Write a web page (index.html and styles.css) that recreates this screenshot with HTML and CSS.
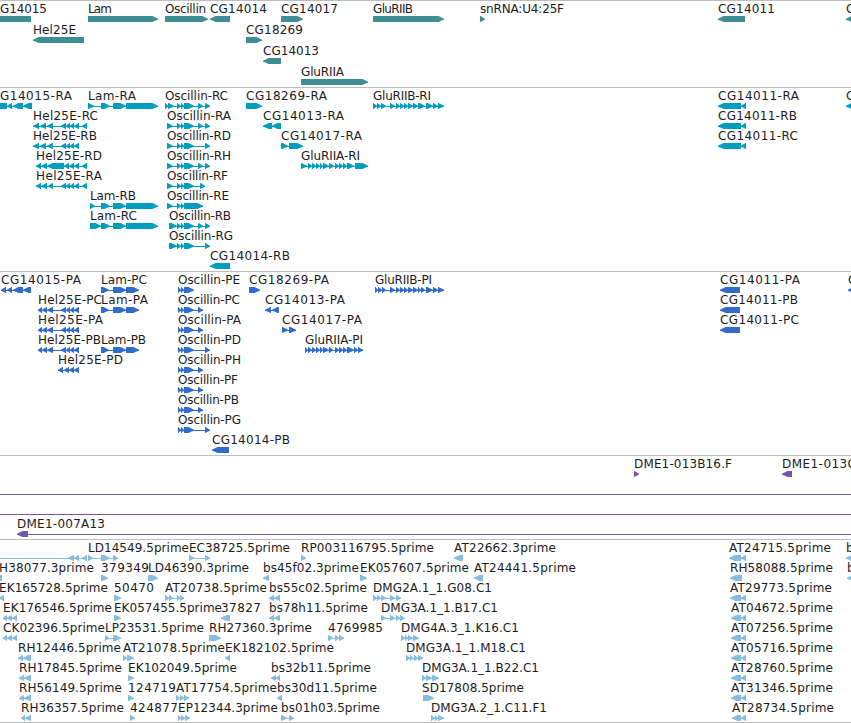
FILE: index.html
```html
<!DOCTYPE html>
<html lang="en">
<head>
<meta charset="utf-8">
<title>Genome tracks</title>
<link rel="stylesheet" href="styles.css">
</head>
<body>
<main class="browser">
  <section class="track genes" id="genes"></section>
  <section class="track transcripts" id="transcripts"></section>
  <section class="track proteins" id="proteins"></section>
  <section class="track clones" id="clones"></section>
  <section class="track ests" id="ests"></section>
</main>
<script src="tracks.js"></script>
</body>
</html>
```
FILE: styles.css
```css
body {
  margin: 0;
  background: #fff;
  overflow: hidden;
}

.browser {
  display: flex;
  flex-direction: column;
  width: 851px;
  height: 722px;
  border-bottom: 1px solid #bebebe;
}

.track {
  box-sizing: border-box;
  flex: none;
  display: flex;
  flex-direction: column;
  border-top: 1px solid #bebebe;
  padding-top: 1px;
}

.row {
  display: block;
  flex: none;
  width: 851px;
  height: 20px;
  overflow: hidden;
}

.row text {
  font: 12px "DejaVu Sans", sans-serif;
  fill: #1c1c1c;
}

.genes { height: 87px; color: #3f8e94; }
.genes .row { height: 21px; }
.transcripts { height: 184px; color: #009dbf; }
.proteins { height: 184px; color: #316ccc; }
.clones { height: 84px; color: #7556a8; }
.ests { height: 183px; color: #87bcde; }

.feature { fill: currentColor; }
```
FILE: tracks.js
```js
// One string per row. Features are separated by ";" and hold
// label | label start | label end | strand | exon ranges
const osc = "177-181 181-184 184-194";
const hel = "61-66 66-70 70-74 74-79";
const pep = "178-181 181-184 184-194";
const lamP = "101-109 113-126 126-139";
const tracks = {
  genes: [
    "G14015|0|46|<|-12-31;Lam|88|111|>|88-158;Oscillin|165|205|>|165-208;CG14014|210|266|<|210-230;CG14017|281|337|>|281-303;GluRIIB|373|412|>|373-444;snRNA:U4:25F|480|563|>|480-485;CG14011|718|774|<|718-745;C|846||<|846-870",
    "Hel25E|33|75|<|33-84;CG18269|246|302|>|246-262",
    "CG14013|263|318|<|263-281",
    "GluRIIA|301|343|>|301-368"
  ],
  transcripts: [
    `G14015-RA|0|71|<|-12-7 7-12 13-23 23-32;Lam-RA|88|135|>|88-94 101-110 113-126 126-158;Oscillin-RC|165|227|>|165-168 168-174 ${osc} 198-203 205-210;CG18269-RA|246|326|>|246-262;GluRIIB-RI|373|430|>|373-377 377-381 381-386 390-395 396-400 400-404 404-408 408-413 413-418 418-425 426-433 433-438 438-444;CG14011-RA|718|798|<|718-741 741-746;C|846||<|846-870`,
    `Hel25E-RC|33|97|<|33-39 40-46 47-53 ${hel} 82-87;Oscillin-RA|167|230|>|167-173 ${osc} 198-203 205-210;CG14013-RA|263|343|<|263-272 272-281;CG14011-RB|718|796|<|718-741 741-746`,
    `Hel25E-RB|33|96|<|33-39 40-46 47-53 ${hel};Oscillin-RD|167|230|>|167-173 ${osc} 205-210;CG14017-RA|281|361|>|281-288 289-303;CG14011-RC|718|797|<|718-741 741-746`,
    `Hel25E-RD|36|101|<|36-41 41-47 47-64 64-69 69-74 74-79 82-87;Oscillin-RH|167|230|>|167-173 ${osc} 198-203 205-210;GluRIIA-RI|301|359|>|301-307 308-312 312-316 316-320 320-323 323-329 329-334 335-339 339-343 343-347 347-354 355-368`,
    `Hel25E-RA|36|101|<|36-41 41-47 48-53 ${hel} 82-87;Oscillin-RF|167|227|>|167-173 ${osc} 200-205`,
    "Lam-RB|90|135|>|90-95 101-110 113-126 126-158;Oscillin-RE|167|228|>|167-173 177-181 181-184 184-203",
    `Lam-RC|90|136|>|90-101 101-110 113-126 126-158;Oscillin-RB|169|230|>|169-177 ${osc} 198-203 205-210`,
    `Oscillin-RG|169|232|>|169-177 ${osc} 205-210`,
    "CG14014-RB|210|289|<|210-230"
  ],
  proteins: [
    `CG14015-PA|1|80|<|1-6 7-12 13-23 23-31;Lam-PC|101|146|>|${lamP};Oscillin-PE|178|239|>|${pep};CG18269-PA|249|328|>|249-260;GluRIIB-PI|375|431|>|375-378 378-382 382-386 390-395 396-400 400-404 404-408 408-413 413-418 418-421 421-425 426-433 433-438 438-444;CG14011-PA|720|799|<|720-740;C|848||<|848-870`,
    `Hel25E-PC|38|101|<|38-42 42-47 47-53 ${hel};Lam-PA|101|147|>|${lamP};Oscillin-PC|178|239|>|${pep} 198-203;CG14013-PA|265|344|<|265-271 272-279;CG14011-PB|720|797|<|720-740`,
    `Hel25E-PA|38|102|<|38-42 42-47 47-53 ${hel};Oscillin-PA|178|240|>|${pep} 198-203;CG14017-PA|282|361|>|282-288 289-296;CG14011-PC|720|798|<|720-740`,
    `Hel25E-PB|38|100|<|38-42 42-47 47-53 ${hel};Lam-PB|101|145|>|${lamP};Oscillin-PD|178|240|>|${pep} 205-210;GluRIIA-PI|305|362|>|305-308 308-312 312-316 316-320 320-323 323-329 329-333 335-339 339-343 343-347 347-354 354-358 358-363`,
    `Hel25E-PD|58|122|<|58-63 64-69 69-74 74-79;Oscillin-PH|178|240|>|${pep} 198-203`,
    `Oscillin-PF|178|237|>|${pep} 198-203`,
    `Oscillin-PB|178|238|>|${pep} 198-203`,
    `Oscillin-PG|178|240|>|${pep} 205-210`,
    "CG14014-PB|212|289|<|212-229"
  ],
  clones: [
    "DME1-013B16.F|634|731|>|634-639;DME1-013C|782|855|<|782-792",
    "|0||-|-20-870",
    "|0||-|-20-870",
    "DME1-007A13|17|104|<|17-28;|0||-|28-870"
  ],
  ests: [
    "|0||-|-20-68;|0||<|68-74 74-79 82-87;LD14549.5prime|88|188|>|88-93 101-110 113-118;EC38725.5prime|189|289|>|189-194 205-210;RP003116795.5prime|301|433|>|301-306;AT22662.3prime|454|555|<|454-463;AT24715.5prime|729|830|<|729-741 741-746;b|846||<|846-870",
    "H38077.3prime|-1|93|-|;|0||=|-5-2;379349|101|148|>|101-108;LD46390.3prime|148|248|>|148-158;bs45f02.3prime|263|358|<|263-269;EK057607.5prime|360|468|>|360-367;AT24441.5prime|474|575|<|474-483;RH58088.5prime|730|832|<|730-742;b|847||<|847-870",
    "EK165728.5prime|-1|107|<|-1-4;50470|114|153|>|114-121;AT20738.5prime|165|266|>|165-169 169-173 177-180 180-184;bs55c02.5prime|269|366|<|269-274 274-280;DMG2A.1_1.G08.C1|373|491|>|373-377 377-381 381-386 390-395 396-401;AT29773.5prime|730|831|<|730-741 741-746",
    "EK176546.5prime|3|111|<|3-7 7-12 12-17;EK057455.5prime|114|221|>|114-121;37827|221|260|<|221-230;bs78h11.5prime|269|367|<|269-274 274-280;DMG3A.1_1.B17.C1|381|497|>|381-386 390-395 396-400 400-405;AT04672.5prime|731|832|<|731-741 741-746",
    "CK02396.5prime|3|104|<|3-7 7-12 12-17;LP23531.5prime|105|203|>|105-109 113-121;RH27360.3prime|209|311|>|209-221;4769985|328|382|>|328-333 335-339 339-344;DMG4A.3_1.K16.C1|401|518|>|401-405 405-408 408-413 413-419;AT07256.5prime|731|832|<|731-741 741-746",
    "RH12446.5prime|18|120|<|18-23 23-31;AT21078.5prime|123|224|>|123-127 127-134;EK182102.5prime|225|333|<|225-230;DMG3A.1_1.M18.C1|406|525|>|406-410 410-413 414-418 418-423;AT05716.5prime|731|832|<|731-741 741-746",
    "RH17845.5prime|19|121|<|19-24 24-31;EK102049.5prime|128|236|>|128-134;bs32b11.5prime|271|370|<|271-276 276-280;DMG3A.1_1.B22.C1|422|538|>|422-426 426-432 432-439;AT28760.5prime|731|832|<|731-741 741-746",
    "RH56149.5prime|19|121|<|19-24 24-31;124719|128|175|>|128-134;AT17754.5prime|176|276|>|176-180 180-184 184-189;bs30d11.5prime|277|376|<|277-282;SD17808.5prime|422|523|>|423-434;AT31346.5prime|731|832|<|731-741 741-746",
    "RH36357.5prime|21|123|<|21-25 25-31;424877|130|177|>|130-135;EP12344.3prime|178|277|>|178-181 181-185 185-190;bs01h03.5prime|281|379|>|281-287 289-294;DMG3A.2_1.C11.F1|431|546|>|431-435 435-438 438-444;AT28734.5prime|732|833|<|732-741 741-746"
  ]
};

const TOP = 14, MID = 17.3, BOTTOM = 20;

// Exon block whose last few pixels taper to a blunt tip on the strand side.
function exon(a, b, strand) {
  const w = b - a;
  if (strand === "=") return `M${a} ${TOP}H${b}V${BOTTOM}H${a}Z`;
  const tip = strand === ">" ? b : a;
  const back = strand === ">" ? a : b;
  const dir = strand === ">" ? -1 : 1;
  const shoulder = tip + dir * Math.min(5.5, w - 0.5);
  const mid = tip + dir * Math.min(3, w / 2);
  return `M${back} ${TOP}H${shoulder}L${mid} ${TOP + 1.2}L${tip} ${MID - 0.5}V${MID + 0.5}L${mid} ${BOTTOM - 1.2}L${shoulder} ${BOTTOM}H${back}Z`;
}

function feature(spec) {
  const [label, x, end, strand, ranges] = spec.split("|");
  let out = "";
  const exons = (ranges.match(/-?\d+-\d+/g) || []).map(r => r.match(/^(-?\d+)-(\d+)$/).slice(1).map(Number));
  if (exons.length) {
    const from = exons[0][0], to = exons[exons.length - 1][1];
    if (exons.length > 1 || strand === "-") {
      out += `<path class="feature" d="M${from} 17H${to}V18H${from}Z"/>`;
    }
    if (strand !== "-") out += exons.map(e => `<path class="feature" d="${exon(e[0], e[1], strand)}"/>`).join("");
  }
  if (label) {
    const fit = end ? ` textLength="${end - x + 1}"` : "";
    out += `<text x="${x}" y="11"${fit}>${label}</text>`;
  }
  return out;
}

for (const [id, rows] of Object.entries(tracks)) {
  document.getElementById(id).innerHTML = rows
    .map(row => `<svg class="row">${row.split(";").map(feature).join("")}</svg>`)
    .join("");
}
```
